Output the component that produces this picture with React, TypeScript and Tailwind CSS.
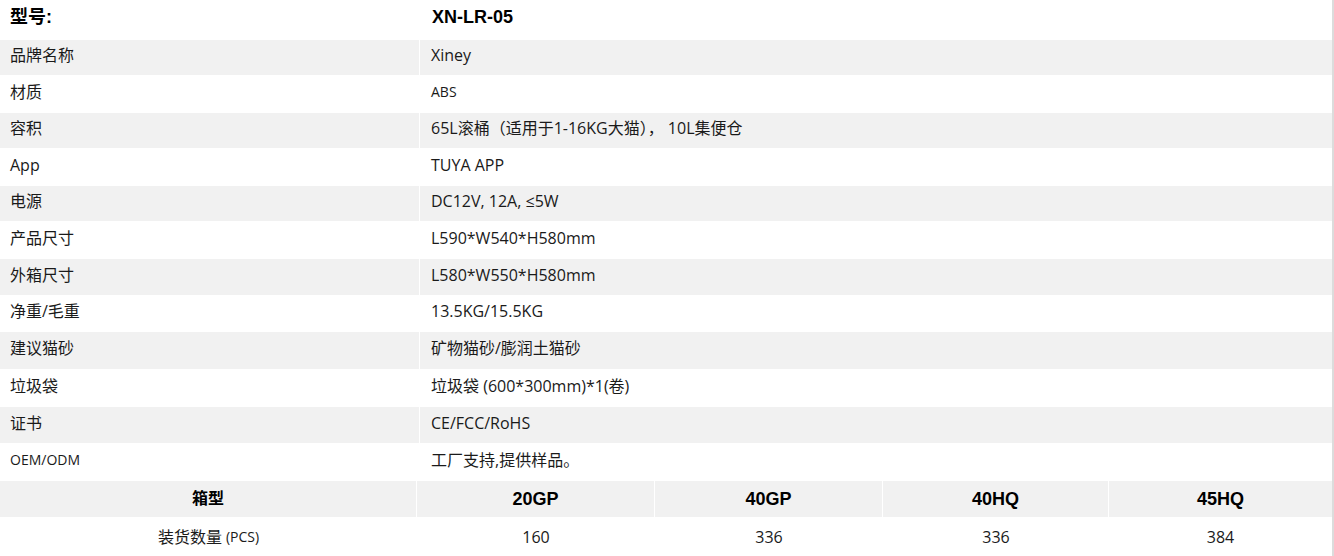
const specs: { label: string; value: string; h: string; small?: "label" | "value" }[] = [
  { label: "品牌名称", value: "Xiney", h: "h-[35px]" },
  { label: "材质", value: "ABS", h: "h-[38px]", small: "value" },
  { label: "容积", value: "65L滚桶（适用于1-16KG大猫）， 10L集便仓", h: "h-[35px]" },
  { label: "App", value: "TUYA APP", h: "h-[38px]" },
  { label: "电源", value: "DC12V, 12A, ≤5W", h: "h-[35px]" },
  { label: "产品尺寸", value: "L590*W540*H580mm", h: "h-[38px]" },
  { label: "外箱尺寸", value: "L580*W550*H580mm", h: "h-[36px]" },
  { label: "净重/毛重", value: "13.5KG/15.5KG", h: "h-[37px]" },
  { label: "建议猫砂", value: "矿物猫砂/膨润土猫砂", h: "h-[37px]" },
  { label: "垃圾袋", value: "垃圾袋 (600*300mm)*1(卷)", h: "h-[38px]" },
  { label: "证书", value: "CE/FCC/RoHS", h: "h-[36px]" },
  { label: "OEM/ODM", value: "工厂支持,提供样品。", h: "h-[38px]", small: "label" },
];

const containers = [
  { name: "20GP", qty: "160", w: "w-[238px]" },
  { name: "40GP", qty: "336", w: "w-[228px]" },
  { name: "40HQ", qty: "336", w: "w-[226px]" },
  { name: "45HQ", qty: "384", w: "w-[223px]" },
];

export default function App() {
  return (
    <div className="flex w-[1334px] bg-white text-[#1a1a1a] font-['Open_Sans','Noto_Sans_CJK_SC',sans-serif]">
      <div className="w-[1332px]">
        {/* header row */}
        <div className="flex h-[40px] bg-white font-['Liberation_Sans','Noto_Sans_CJK_SC',sans-serif] text-[18px] font-bold text-black">
          <div className="flex w-[420px] items-center pb-[5px] pl-[10px]">型号:</div>
          <div className="flex flex-1 items-center pb-[5px] pl-[12px]">XN-LR-05</div>
        </div>

        {specs.map((row, i) => (
          <div
            key={row.label}
            className={`flex ${row.h} ${i % 2 === 0 ? "bg-[#f1f1f1]" : "bg-white"} text-[16px]`}
          >
            <div
              className={`flex w-[420px] items-center border-r border-white pb-[5px] pl-[10px] ${
                row.small === "label" ? "text-[14px]" : ""
              }`}
            >
              {row.label}
            </div>
            <div
              className={`flex flex-1 items-center pb-[5px] pl-[11px] ${
                row.small === "value" ? "text-[14px]" : ""
              }`}
            >
              {row.value}
            </div>
          </div>
        ))}

        {/* container table */}
        <div className="flex h-[36px] bg-[#f1f1f1] font-['Liberation_Sans','Noto_Sans_CJK_SC',sans-serif] font-bold text-black">
          <div className="flex w-[417px] items-center justify-center border-r border-white text-[16px]">箱型</div>
          {containers.map((c, i) => (
            <div
              key={c.name}
              className={`flex ${c.w} items-center justify-center text-[18px] ${
                i < containers.length - 1 ? "border-r border-white" : ""
              }`}
            >
              {c.name}
            </div>
          ))}
        </div>
        <div className="flex h-[39px] bg-white text-[16px]">
          <div className="flex w-[417px] items-center justify-center gap-1">
            装货数量 <span className="text-[14px]">(PCS)</span>
          </div>
          {containers.map((c) => (
            <div key={c.name} className={`flex ${c.w} items-center justify-center`}>
              {c.qty}
            </div>
          ))}
        </div>
      </div>
      <div className="w-[2px] bg-[#dcdcdc]" />
    </div>
  );
}
